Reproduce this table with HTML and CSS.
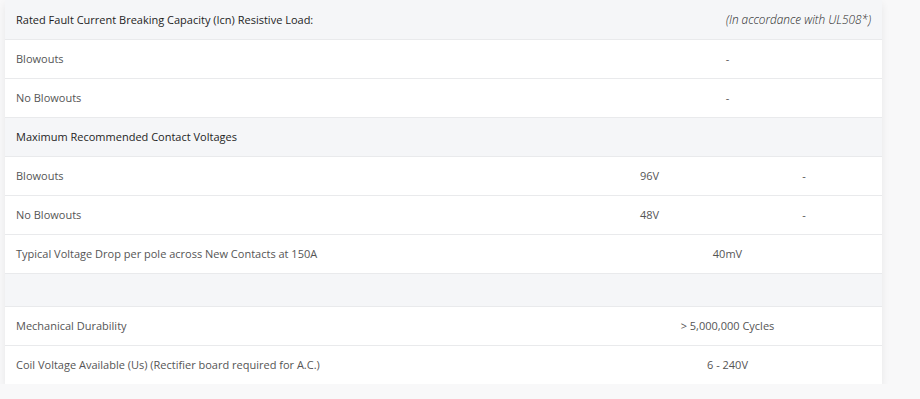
FILE: index.html
```html
<!DOCTYPE html>
<html lang="en">
<head>
<meta charset="utf-8">
<title>Contactor specifications</title>
<link rel="stylesheet" href="styles.css">
</head>
<body>
<div class="spec-wrap">
  <table class="spec">
    <colgroup>
      <col class="c-label">
      <col class="c-val">
      <col class="c-val2">
    </colgroup>
    <tbody>
      <tr class="group">
        <td>Rated Fault Current Breaking Capacity (Icn) Resistive Load:</td>
        <td colspan="2" class="note">(In accordance with UL508*)</td>
      </tr>
      <tr>
        <td>Blowouts</td>
        <td colspan="2" class="val">-</td>
      </tr>
      <tr>
        <td>No Blowouts</td>
        <td colspan="2" class="val">-</td>
      </tr>
      <tr class="group">
        <td colspan="3">Maximum Recommended Contact Voltages</td>
      </tr>
      <tr>
        <td>Blowouts</td>
        <td class="val">96V</td>
        <td class="val">-</td>
      </tr>
      <tr>
        <td>No Blowouts</td>
        <td class="val">48V</td>
        <td class="val">-</td>
      </tr>
      <tr>
        <td>Typical Voltage Drop per pole across New Contacts at 150A</td>
        <td colspan="2" class="val">40mV</td>
      </tr>
      <tr class="group spacer">
        <td colspan="3"></td>
      </tr>
      <tr>
        <td>Mechanical Durability</td>
        <td colspan="2" class="val">&gt; 5,000,000 Cycles</td>
      </tr>
      <tr class="last">
        <td>Coil Voltage Available (Us) (Rectifier board required for A.C.)</td>
        <td colspan="2" class="val">6 - 240V</td>
      </tr>
    </tbody>
  </table>
</div>
</body>
</html>
```

FILE: styles.css
```css
html, body {
  margin: 0;
  padding: 0;
  background: #f8f8f9;
}

body {
  font-family: "Open Sans", "Liberation Sans", sans-serif;
  font-size: 11px;
  color: #555;
}

.spec-wrap {
  padding: 0 38px 0 5px;
}

.spec {
  width: 877px;
  border-collapse: collapse;
  table-layout: fixed;
  background: #fff;
  box-shadow: 0 4px 8px rgba(0, 0, 0, 0.07);
}

.c-label { width: 568px; }
.c-val { width: 153px; }
.c-val2 { width: 156px; }

.spec td {
  height: 39px;
  padding: 0 11px;
  box-sizing: border-box;
  border-bottom: 1px solid #e9eaec;
  white-space: nowrap;
  vertical-align: middle;
}

.spec tr.last td {
  border-bottom: none;
}

.spec .group td {
  background: #f5f6f8;
  color: #1e1e1e;
}

.spec .spacer td {
  height: 33px;
}

.spec .val {
  text-align: center;
}

.spec .note {
  text-align: right;
  font-style: italic;
  font-weight: 300;
  font-size: 11.8px;
  color: #707070;
}
```
